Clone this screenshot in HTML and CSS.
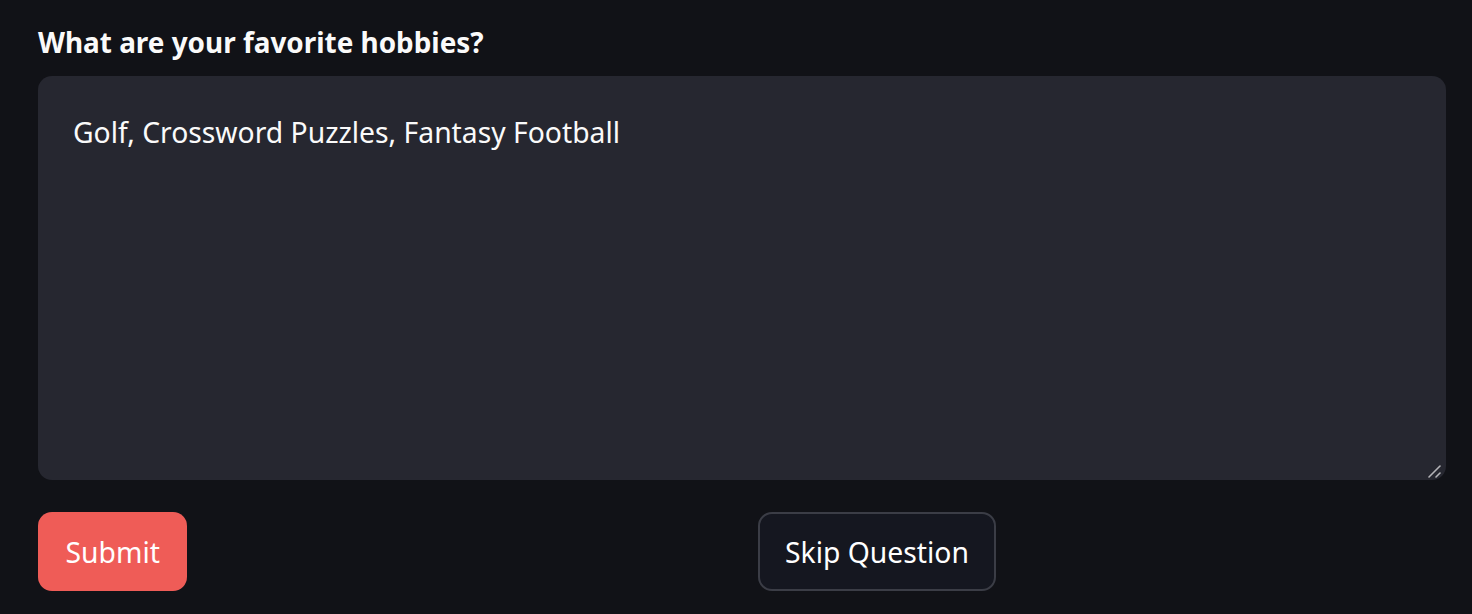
FILE: index.html
```html
<!DOCTYPE html>
<html>
<head>
<meta charset="utf-8">
<link rel="stylesheet" href="styles.css">
</head>
<body>
<main class="form">
  <label class="label" for="hobbies">What are your favorite hobbies?</label>
  <div class="area-wrap">
    <textarea id="hobbies" class="area" readonly>Golf, Crossword Puzzles, Fantasy Football</textarea>
    <svg class="grip" width="16" height="16" viewBox="0 0 16 16" aria-hidden="true">
      <line x1="2" y1="14" x2="13" y2="3" stroke="#b4b4b8" stroke-width="1.6" stroke-linecap="round"/>
      <line x1="9" y1="14" x2="13" y2="10" stroke="#b4b4b8" stroke-width="1.6" stroke-linecap="round"/>
    </svg>
  </div>
  <div class="actions">
    <div class="col"><button class="btn primary">Submit</button></div>
    <div class="col"><button class="btn secondary">Skip Question</button></div>
  </div>
</main>
</body>
</html>
```
FILE: styles.css
```css
html, body {
  margin: 0;
  padding: 0;
  background: #111217;
  height: 100%;
}
body {
  font-family: "Noto Sans", "Open Sans", sans-serif;
  color: #fafafa;
}
.form {
  padding: 24px 26px 0 38px;
  display: flex;
  flex-direction: column;
}
.label {
  font-weight: 700;
  font-size: 27.9px;
  line-height: 36px;
  height: 40px;
  margin-bottom: 12px;
}
.area-wrap {
  position: relative;
  width: 1408px;
  height: 404px;
}
.area {
  display: block;
  box-sizing: border-box;
  width: 100%;
  height: 100%;
  background: #262730;
  border: none;
  border-radius: 14px;
  color: #fafafa;
  font-family: inherit;
  font-size: 28.3px;
  padding: 36px 35px 16px;
  line-height: 40px;
  resize: none;
  outline: none;
}
.grip {
  position: absolute;
  right: 3px;
  bottom: 1px;
}
.actions {
  margin-top: 32px;
  display: grid;
  grid-template-columns: 688px 688px;
  column-gap: 32px;
}
.btn {
  height: 79px;
  border-radius: 14px;
  font-family: inherit;
  font-size: 28.3px;
  color: #ffffff;
}
.primary {
  background: #ef5c57;
  border: none;
  padding: 0 27.5px;
}
.secondary {
  background: #151720;
  border: 2px solid #3b3d46;
  padding: 0 25px;
}
```
